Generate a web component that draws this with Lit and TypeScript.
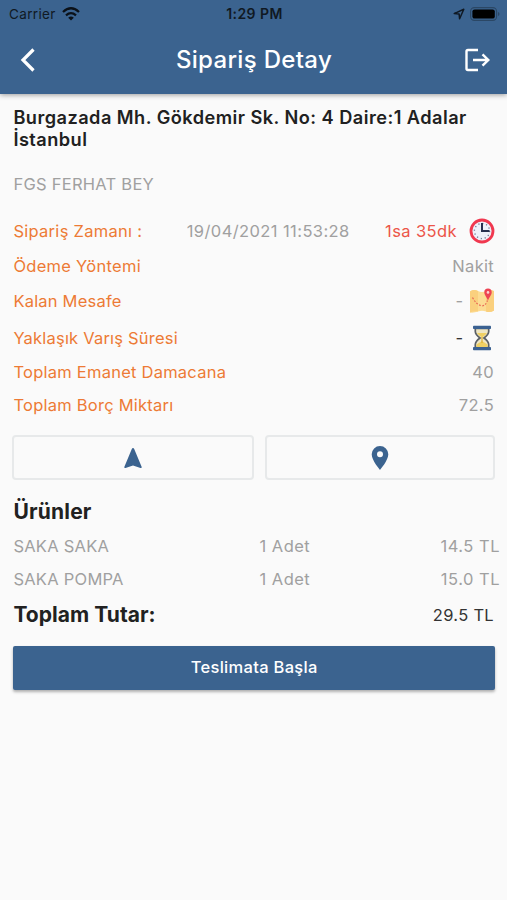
import { LitElement, html, css, svg } from "lit";
import { customElement } from "lit/decorators.js";

const clockIcon = svg`<svg class="ic" viewBox="0 0 26 26">
  <circle cx="13" cy="13" r="11" fill="#eef1fa" stroke="#f0384f" stroke-width="2.8"/>
  <circle cx="13" cy="13" r="7.6" fill="none" stroke="#6f7892" stroke-width="1.3" stroke-dasharray="1.2 2.78"/>
  <path d="M13 5V13H20.500" fill="none" stroke="#27304f" stroke-width="2"/></svg>`;

const mapIcon = svg`<svg class="ic" viewBox="0 0 26 26">
  <path d="M1 3.500Q5 1 9 3T17 3T25 3V22.500Q21 25 17 23.500T9 23.500T1 24.500Z" fill="#fcdc93"/>
  <path d="M1 3.500Q5 1 9 3V23.500Q5 22.500 1 24.500ZM17 3Q21 1.500 25 3V22.500Q21 25 17 23.500Z" fill="#fad07e"/>
  <path d="M3.500 9.500Q7 16 11.500 17.500T18.500 12.500" fill="none" stroke="#e96a55" stroke-width="1.2" stroke-dasharray="1.8 1.5"/>
  <path d="M19 12.500C17.500 8.500 15.300 7 15.300 4.200A3.700 3.700 0 0 1 22.700 4.200C22.700 7 20.500 8.500 19 12.500Z" fill="#ee4453"/>
  <circle cx="19" cy="4.400" r="1.300" fill="#fbd3cf"/></svg>`;

const hourglassIcon = svg`<svg class="ic" viewBox="0 0 26 26">
  <path d="M6.300 3.500V6.500Q6.300 9.500 11 13Q6.300 16.500 6.300 19.500V22.500H19.700V19.500Q19.700 16.500 15 13Q19.700 9.500 19.700 6.500V3.500Z" fill="#eee6c4" stroke="#5b6065" stroke-width="1.700"/>
  <path d="M8 8H18Q16.500 10.500 13 12.500Q9.500 10.500 8 8ZM7.500 22V19.500L13 16L18.500 19.500V22Z" fill="#efd064"/>
  <path d="M13 12V18" stroke="#d9ad33" stroke-width="1.200"/>
  <rect x="4" y=".8" width="18" height="3.200" rx=".8" fill="#3b6191"/>
  <rect x="4" y="22" width="18" height="3.200" rx=".8" fill="#3b6191"/></svg>`;

@customElement("app-root")
export class AppRoot extends LitElement {
  static styles = css`
    :host { display: block; height: 900px; background: #fafafa; color: #212121;
      font: 16.5px/22px Inter, "Liberation Sans", sans-serif; letter-spacing: .3px; white-space: nowrap; overflow: hidden; }
    * { box-sizing: border-box; }
    svg { display: block; flex: none; }
    header { height: 94px; background: #3b638f; box-shadow: 0 1px 5px rgba(0,0,0,.38); }
    .status { height: 28px; display: grid; grid-template-columns: 1fr auto 1fr; align-items: center;
      padding: 0 7px 0 9px; color: #101923; font-size: 13.5px; letter-spacing: .35px; }
    .carrier, .battery { display: flex; align-items: center; gap: 6px; }
    .battery { justify-content: flex-end; gap: 5px; }
    .time { font-weight: 600; font-size: 14px; letter-spacing: .45px; }
    .nav { height: 66px; display: grid; grid-template-columns: 1fr auto 1fr; align-items: center;
      padding: 0 16px 2px 20px; color: #fff; }
    .title { font-size: 24px; font-weight: 500; letter-spacing: .32px; margin-right: 3px; }
    .exit { justify-self: end; }
    main { padding: 12px 12px 0 13.4px; }
    .address { font-size: 18.2px; font-weight: 600; letter-spacing: .46px; }
    .muted { color: #a0a0a0; }
    .customer { margin: 23px 0 18px; letter-spacing: .26px; }
    .row { display: flex; align-items: center; justify-content: space-between; height: 33px; color: #a0a0a0; }
    .label { color: #ed7a35; letter-spacing: .2px; }
    .r1 { height: 36px; } .r2 { height: 34px; padding-right: 1px; } .r3 { height: 36px; }
    .r4 { height: 36px; padding-top: 1px; }
    .r1 .label, .r2 .label { letter-spacing: .28px; }
    .r5 .label { letter-spacing: .24px; }
    .date { letter-spacing: .41px; margin-left: 9px; }
    .r5 { padding-right: 1px; }
    .late { color: #ec5549; letter-spacing: .4px; }
    .with-icon { display: flex; align-items: center; }
    .ic { width: 26px; height: 26px; margin-left: 5.5px; }
    .r1 .ic { margin-left: 12px; }
    .dark { color: #333; }
    .actions { display: grid; grid-template-columns: 242px 1fr; gap: 11px; margin: 14px 0 0 -1px; }
    .action { height: 45px; border: 2px solid #e7e9ea; border-radius: 4px; background: #fafafa;
      display: grid; place-items: center; padding: 0; }
    h2 { margin: 0; font-size: 21px; line-height: 32px; font-weight: 650; letter-spacing: .2px; }
    .products { margin-top: 16px; }
    .product { display: grid; grid-template-columns: 246px auto 1fr; height: 33px; align-items: center; margin-right: -5px;
      color: #a0a0a0; letter-spacing: .5px; padding-top: 2px; }
    .name { letter-spacing: .25px; }
    .price { text-align: right; letter-spacing: .5px; }
    .total { display: flex; justify-content: space-between; align-items: center; height: 40px; padding: 1px 1px 0 0; }
    .total h2 { letter-spacing: .05px; }
    .submit { display: block; width: 100%; height: 44px; margin-top: 12px; border: 0; border-radius: 2px; background: #3b638f;
      color: #fff; font: 500 16.5px/22px Inter, sans-serif; letter-spacing: .3px; box-shadow: 0 2px 3px rgba(0,0,0,.3); padding: 0 0 2px; }
  `;

  private products = [
    { name: "SAKA SAKA", qty: "1 Adet", price: "14.5 TL" },
    { name: "SAKA POMPA", qty: "1 Adet", price: "15.0 TL" },
  ];

  render() {
    return html`
      <header>
        <div class="status">
          <div class="carrier"><span>Carrier</span>
            <svg width="18" height="14" viewBox="0 0 18 14"><g fill="none" stroke="#0b1118" stroke-width="2.300">
              <path d="M1 5Q9 -2.400 17 5"/><path d="M4 8.300Q9 4 14 8.300"/></g><path d="M6.200 10.700Q9 8.500 11.800 10.700L9 13.600Z" fill="#0b1118"/></svg>
          </div>
          <span class="time">1:29 PM</span>
          <div class="battery">
            <svg width="12" height="12" viewBox="0 0 12 12"><path d="M1.200 5.600L10.800 1.200L6.600 10.800L6.100 5.900Z" fill="none" stroke="#101923" stroke-width="1.500" stroke-linejoin="round"/></svg>
            <svg width="30" height="14" viewBox="0 0 30 14"><rect x=".6" y=".6" width="26" height="12.800" rx="3.800" fill="none" stroke="#2b4765" stroke-width="1.100"/><rect x="2.400" y="2.400" width="22.400" height="9.200" rx="2.200" fill="#000"/><path d="M28 5V9Q29.500 8.400 29.500 7T28 5Z" fill="#2b4765"/></svg>
          </div>
        </div>
        <div class="nav">
          <svg width="16" height="26" viewBox="0 0 16 26"><path d="M13.500 2.500L3 13L13.500 23.500" fill="none" stroke="#fff" stroke-width="3.200"/></svg>
          <span class="title">Sipariş Detay</span>
          <svg class="exit" width="27" height="24" viewBox="0 0 27 24"><path d="M14 2H4Q2.500 2 2.500 3.500V20.500Q2.500 22 4 22H14M9 12H24.500M18.500 6.300L24.300 12L18.500 17.700" fill="none" stroke="#fff" stroke-width="2.400"/></svg>
        </div>
      </header>
      <main>
        <div class="address">Burgazada Mh. Gökdemir Sk. No: 4 Daire:1 Adalar<br>İstanbul</div>
        <div class="customer muted">FGS FERHAT BEY</div>
        <div class="row r1"><span class="label">Sipariş Zamanı :</span><span class="date">19/04/2021 11:53:28</span><span class="with-icon late">1sa 35dk${clockIcon}</span></div>
        <div class="row r2"><span class="label">Ödeme Yöntemi</span><span>Nakit</span></div>
        <div class="row r3"><span class="label">Kalan Mesafe</span><span class="with-icon">-${mapIcon}</span></div>
        <div class="row r4"><span class="label">Yaklaşık Varış Süresi</span><span class="with-icon dark">-${hourglassIcon}</span></div>
        <div class="row r5"><span class="label">Toplam Emanet Damacana</span><span>40</span></div>
        <div class="row r5"><span class="label">Toplam Borç Miktarı</span><span>72.5</span></div>
        <div class="actions">
          <button class="action"><svg width="20" height="24" viewBox="0 0 20 24"><path d="M10 2Q10.800 2 11.200 3L18.700 21Q18.900 22.400 17.500 22L10 19.500L2.500 22Q1.100 22.400 1.300 21L8.800 3Q9.200 2 10 2Z" fill="#3b638f"/></svg></button>
          <button class="action"><svg width="18" height="26" viewBox="0 0 18 26"><path fill-rule="evenodd" d="M9 1A8.300 8.300 0 0 0 .700 9.300C.700 15.500 9 25 9 25S17.300 15.500 17.300 9.300A8.300 8.300 0 0 0 9 1ZM9 6.300A3 3 0 1 1 9 12.300A3 3 0 0 1 9 6.300Z" fill="#3b638f"/></svg></button>
        </div>
        <section class="products">
          <h2>Ürünler</h2>
          ${this.products.map((p) => html`<div class="product"><span class="name">${p.name}</span><span>${p.qty}</span><span class="price">${p.price}</span></div>`)}
        </section>
        <div class="total"><h2>Toplam Tutar:</h2><span class="dark">29.5 TL</span></div>
        <button class="submit">Teslimata Başla</button>
      </main>`;
  }
}
